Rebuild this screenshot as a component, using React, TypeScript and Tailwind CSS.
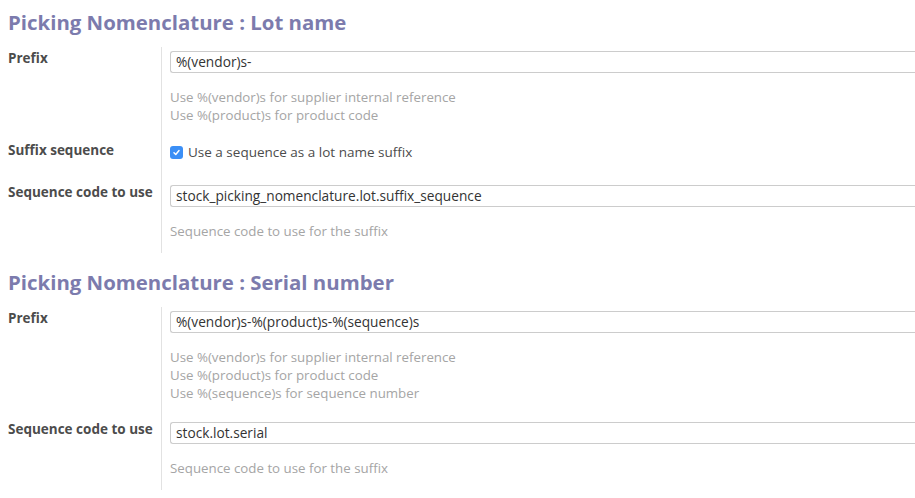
import type { ReactNode } from 'react';

// one form row: bold label on the left, field + help on the right of the divider
function Row({ label, children, className = '' }: { label: string; children: ReactNode; className?: string }) {
  return (
    <div className="flex">
      <div className="w-[161px] shrink-0 pl-2 pr-2 pt-[2px] text-[13.5px] leading-[18px] font-bold text-[#4c4c4c]">{label}</div>
      <div className={`flex-1 min-w-0 border-l border-[#e2e2e2] pl-[8px] ${className}`}>{children}</div>
    </div>
  );
}

function TextInput({ value }: { value: string }) {
  return (
    <div className="h-[22px] rounded-l-[3px] border border-r-0 border-[#cccccc] bg-white pl-[5px] text-[13.7px] leading-[20px] text-[#333333] whitespace-nowrap">
      {value}
    </div>
  );
}

function Help({ lines }: { lines: string[] }) {
  return (
    <div className="mt-[15px] text-[13.3px] leading-[18px] text-[#a5a5a5]">
      {lines.map((l) => (
        <div key={l}>{l}</div>
      ))}
    </div>
  );
}

function Checkbox() {
  // mac style blue checked box
  return (
    <span className="inline-flex h-[13px] w-[13px] shrink-0 items-center justify-center rounded-[3px] bg-[#3b8ff6]">
      <svg viewBox="0 0 10 10" className="h-[9px] w-[9px]">
        <path d="M2.2 5.2 L4.2 7.2 L7.8 2.8" fill="none" stroke="white" strokeWidth="1.6" strokeLinecap="round" strokeLinejoin="round" />
      </svg>
    </span>
  );
}

function SectionTitle({ children }: { children: ReactNode }) {
  return <h2 className="px-2 text-[20.4px] leading-[28px] font-bold text-[#7c7bad]">{children}</h2>;
}

export default function App() {
  return (
    <div className="w-[915px] h-[498px] overflow-hidden bg-white font-['Open_Sans',sans-serif]">
      {/* Lot name section */}
      <div className="pt-[8px]">
        <SectionTitle>Picking Nomenclature : Lot name</SectionTitle>
      </div>
      <div className="mt-[11px]">
        <Row label="Prefix" className="pt-[4px] pb-[15px]">
          <TextInput value="%(vendor)s-" />
          <Help lines={['Use %(vendor)s for supplier internal reference', 'Use %(product)s for product code']} />
        </Row>
        <Row label="Suffix sequence" className="pt-[4px] pb-[20px]">
          <label className="flex items-center gap-[5px] text-[13.5px] leading-[18px] text-[#4c4c4c]">
            <Checkbox />
            <span>Use a sequence as a lot name suffix</span>
          </label>
        </Row>
        <Row label="Sequence code to use" className="pt-[4px] pb-[13px]">
          <TextInput value="stock_picking_nomenclature.lot.suffix_sequence" />
          <Help lines={['Sequence code to use for the suffix']} />
        </Row>
      </div>

      {/* Serial number section */}
      <div className="mt-[15px]">
        <SectionTitle>Picking Nomenclature : Serial number</SectionTitle>
      </div>
      <div className="mt-[11px]">
        <Row label="Prefix" className="pt-[4px] pb-[16px]">
          <TextInput value="%(vendor)s-%(product)s-%(sequence)s" />
          <Help
            lines={[
              'Use %(vendor)s for supplier internal reference',
              'Use %(product)s for product code',
              'Use %(sequence)s for sequence number',
            ]}
          />
        </Row>
        <Row label="Sequence code to use" className="pt-[4px] pb-[13px]">
          <TextInput value="stock.lot.serial" />
          <Help lines={['Sequence code to use for the suffix']} />
        </Row>
      </div>
    </div>
  );
}
